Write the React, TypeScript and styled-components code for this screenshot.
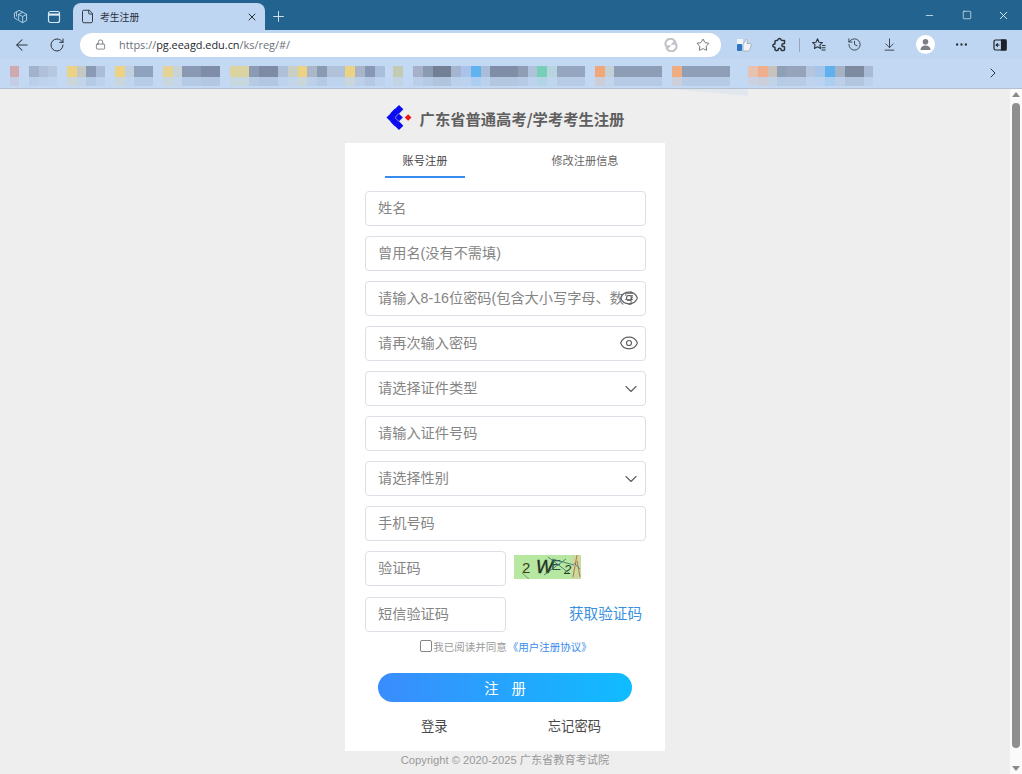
import React from "react";
import styled, { createGlobalStyle } from "styled-components";
import {
  ArrowLeft,
  ArrowDownToLine,
  ChevronDown,
  ChevronRight,
  Eye,
  File,
  History,
  Lock,
  Minus,
  MoreHorizontal,
  Plus,
  RotateCw,
  Square,
  Star,
  X,
} from "lucide-react";

const GlobalStyle = createGlobalStyle`
  html, body {
    margin: 0;
    padding: 0;
    height: 100%;
    overflow: hidden;
    font-family: "Liberation Sans", "Noto Sans CJK SC", sans-serif;
  }
  * { box-sizing: border-box; }
`;

const Shell = styled.div`
  width: 100%;
  height: 100vh;
  display: flex;
  flex-direction: column;
  overflow: hidden;
  background: #eeeeee;
`;

const TitleBar = styled.div`
  height: 30px;
  flex: none;
  display: flex;
  align-items: flex-end;
  background: #22648f;
  color: #dce9f3;
`;

const TitleSlot = styled.div<{ $w: number }>`
  width: ${(p) => p.$w}px;
  height: 27px;
  flex: none;
  display: flex;
  align-items: center;
  justify-content: center;
`;

const Tab = styled.div`
  width: 192px;
  height: 27px;
  flex: none;
  display: flex;
  align-items: center;
  gap: 5px;
  padding: 0 7px 0 7px;
  border-radius: 8px 8px 0 0;
  background: #bfd6f2;
  color: #2a3138;
`;

const TabTitle = styled.span`
  flex: 1;
  font-size: 9.8px;
  font-family: "Noto Sans CJK SC", sans-serif;
`;

const WindowControls = styled.div`
  margin-left: auto;
  height: 30px;
  display: flex;
  align-items: center;
`;

const WindowButton = styled.div`
  width: 37px;
  display: flex;
  justify-content: center;
  color: #ffffff;
`;

const ToolBar = styled.div`
  height: 29px;
  flex: none;
  display: flex;
  align-items: center;
  padding-left: 4px;
  background: #bfd6f2;
  color: #2d3640;
`;

const ToolSlot = styled.div<{ $w?: number; $left?: number }>`
  width: ${(p) => p.$w ?? 36}px;
  margin-left: ${(p) => p.$left ?? 0}px;
  height: 24px;
  flex: none;
  display: flex;
  align-items: center;
  justify-content: center;
`;

const AddressPill = styled.div`
  width: 641px;
  height: 24px;
  margin-left: 6px;
  margin-right: 5px;
  flex: none;
  display: flex;
  align-items: center;
  padding: 0 11px 0 15px;
  border-radius: 12px;
  background: #ffffff;
  color: #444c55;
`;

const Url = styled.div`
  margin-left: 13px;
  flex: 1;
  font-size: 10.9px;
  font-family: "Open Sans", sans-serif;
  color: #6a7078;
  white-space: nowrap;
  b {
    font-weight: 400;
    color: #23282d;
  }
`;

const ToolDivider = styled.div`
  width: 1px;
  height: 14px;
  margin-left: 1px;
  margin-right: 1px;
  flex: none;
  background: #93a8c0;
`;

const Avatar = styled.div`
  width: 19px;
  height: 19px;
  border-radius: 50%;
  background: #ffffff;
  display: flex;
  align-items: center;
  justify-content: center;
`;

const BookmarkBar = styled.div`
  height: 30px;
  flex: none;
  display: flex;
  align-items: flex-start;
  padding: 7px 0 0 10px;
  background: #c2d8f3;
  border-bottom: 1px solid #b4c0cf;
  position: relative;
`;

const Swatches = styled.div`
  display: flex;
  filter: blur(0.5px);
`;

const Swatch = styled.div<{ $w: number; $c: string }>`
  width: ${(p) => p.$w}px;
  height: 11px;
  flex: none;
  background: ${(p) => p.$c};
  position: relative;
  &::after {
    content: "";
    position: absolute;
    left: 0;
    right: 0;
    top: 11px;
    height: 9px;
    background: ${(p) => p.$c};
    opacity: 0.22;
  }
`;

const BookmarkMore = styled.div`
  position: absolute;
  left: 985px;
  top: 6px;
  color: #2d3640;
`;

const BookmarkFade = styled.div`
  position: absolute;
  left: 672px;
  top: 30px;
  width: 76px;
  height: 7px;
  background: #e2e7ed;
  clip-path: polygon(0 0, 100% 0, 100% 100%);
`;

const Body = styled.div`
  flex: 1;
  min-height: 0;
  display: flex;
`;

const Page = styled.main`
  flex: 1;
  min-width: 0;
  display: flex;
  flex-direction: column;
  align-items: center;
`;

const Brand = styled.header`
  height: 54px;
  flex: none;
  display: flex;
  align-items: center;
  gap: 8px;
  padding-top: 3px;
`;

const BrandTitle = styled.h1`
  margin: 0;
  font-size: 15.3px;
  font-weight: 700;
  color: #5f5f5f;
  font-family: "Noto Sans CJK SC", sans-serif;
`;

const Card = styled.section`
  width: 320px;
  height: 608px;
  flex: none;
  display: flex;
  flex-direction: column;
  background: #ffffff;
`;

const Tabs = styled.div`
  height: 35px;
  flex: none;
  display: flex;
  padding: 0 20px 0 40px;
  justify-content: space-between;
`;

const FormTab = styled.div<{ $active?: boolean }>`
  width: 80px;
  height: 35px;
  display: flex;
  align-items: center;
  justify-content: center;
  white-space: nowrap;
  font-size: 11.2px;
  color: ${(p) => (p.$active ? "#444444" : "#666666")};
  border-bottom: 2px solid ${(p) => (p.$active ? "#3a8bee" : "transparent")};
  font-family: "Noto Sans CJK SC", sans-serif;
`;

const SecondTab = styled(FormTab)`
  margin-right: 20px;
`;

const Fields = styled.form`
  margin-top: 13px;
  padding: 0 19px 0 20px;
  display: flex;
  flex-direction: column;
  gap: 10px;
`;

const Field = styled.div<{ $half?: boolean }>`
  position: relative;
  height: 35px;
  flex: none;
  width: ${(p) => (p.$half ? "141px" : "100%")};
`;

const TextInput = styled.input`
  width: 100%;
  height: 100%;
  padding: 0 12px 2px;
  border: 1px solid #dcdfe6;
  border-radius: 4px;
  outline: none;
  background: #ffffff;
  font-size: 14.2px;
  font-family: "Liberation Sans", "Noto Sans CJK SC", sans-serif;
  &::placeholder {
    color: #858585;
    opacity: 1;
  }
`;

const FieldIcon = styled.span<{ $select?: boolean }>`
  position: absolute;
  right: ${(p) => (p.$select ? 5 : 7)}px;
  top: ${(p) => (p.$select ? 8 : 7)}px;
  display: flex;
  color: #626262;
`;

const CodeRow = styled.div<{ $shift?: number }>`
  display: flex;
  align-items: center;
  margin-top: ${(p) => p.$shift ?? 0}px;
`;

const Captcha = styled.svg`
  margin-left: 8px;
  margin-bottom: 4px;
  flex: none;
`;

const SendCode = styled.a`
  margin-left: auto;
  margin-right: 4px;
  margin-bottom: 5px;
  font-size: 14.6px;
  color: #3a8fe0;
  font-family: "Noto Sans CJK SC", sans-serif;
`;

const Agreement = styled.label`
  margin-top: 7px;
  height: 14px;
  display: flex;
  align-items: center;
  justify-content: center;
  padding-left: 2px;
  font-size: 10.5px;
  color: #9a9a9a;
  font-family: "Noto Sans CJK SC", sans-serif;
  a {
    color: #3a8bee;
    margin-left: 1px;
  }
`;

const Check = styled.input`
  appearance: none;
  width: 12px;
  height: 12px;
  margin: 0 1px 0 0;
  border: 1px solid #858585;
  border-radius: 2px;
  background: #ffffff;
`;

const Submit = styled.button`
  width: 254px;
  height: 29px;
  margin: 20px 0 0 33px;
  flex: none;
  border: 0;
  border-radius: 15px;
  background: linear-gradient(90deg, #3a8cfd, #10bcff);
  color: #ffffff;
  font-size: 14.4px;
  white-space: pre;
  font-family: "Noto Sans CJK SC", sans-serif;
`;

const BottomLinks = styled.div`
  margin-top: 14px;
  display: flex;
  justify-content: space-between;
  padding: 0 64px 0 76px;
  font-size: 13.3px;
  color: #484848;
  font-family: "Noto Sans CJK SC", sans-serif;
`;

const Copyright = styled.footer`
  font-size: 11.2px;
  color: #999999;
`;

const ScrollTrack = styled.aside`
  width: 12px;
  flex: none;
  display: flex;
  flex-direction: column;
  align-items: center;
  background: #fafafa;
`;

const ScrollArrow = styled.div<{ $down?: boolean }>`
  width: 0;
  height: 0;
  flex: none;
  margin: 3px 0;
  border-left: 4px solid transparent;
  border-right: 4px solid transparent;
  ${(p) => (p.$down ? "border-top: 5px solid #8a8a8a;" : "border-bottom: 5px solid #8a8a8a;")}
`;

const ScrollThumb = styled.div`
  width: 8px;
  height: 645px;
  margin-top: 3px;
  margin-bottom: auto;
  flex: none;
  border-radius: 4px;
  background: #8e8e8e;
`;

const bookmarks: [number, string][] = [
  [9, "#d0a9b0"], [10, "transparent"], [10, "#a3b2cc"], [9, "#b0c0d8"], [9, "#b6c8e0"], [10, "transparent"],
  [10, "#ecd283"], [9, "#c4c9c4"], [10, "#8a9ab5"], [9, "#aabcd8"], [10, "transparent"],
  [10, "#ecd283"], [9, "#c0d0e0"], [19, "#8fa2bd"], [10, "transparent"],
  [10, "#e4d392"], [9, "#c9d2d4"], [19, "#8999b3"], [19, "#7f8ea8"], [10, "transparent"],
  [19, "#dcd4a0"], [10, "#8b99b3"], [19, "#7d8ba5"], [10, "#aebfd8"], [10, "#c9cfc5"], [9, "#ecd283"], [10, "#a9b7c9"], [10, "#8a9ab0"], [18, "#b0c2da"],
  [10, "#ecd283"], [10, "#a8b5c9"], [10, "#8797b5"], [10, "#a9bfdc"], [8, "transparent"],
  [10, "#c4c9b2"], [10, "transparent"], [10, "#a4b1c9"], [10, "#8a9ab0"], [18, "#737f95"], [10, "#a5b5d0"], [10, "#a9c3ea"], [10, "#5fb3ee"], [9, "#aabdd8"], [28, "#7f8da6"], [10, "#8f9db5"], [9, "#afc2dc"],
  [10, "#78cfb8"], [10, "#b7d4e0"], [28, "#96a6c0"], [10, "transparent"],
  [10, "#f0a878"], [9, "#c4cfd8"], [48, "#8e9db6"], [10, "transparent"],
  [10, "#f0ad82"], [48, "#8f9fb8"], [18, "transparent"],
  [10, "#e8c2b0"], [10, "#f0ae8c"], [9, "#c9c2bc"], [9, "#8f9fb5"], [20, "#95a4bb"], [9, "#b4c5de"],
  [10, "#a6c5ea"], [10, "#5fb0ee"], [10, "#a5b3c5"], [19, "#7d8aa0"], [9, "#a8bad6"],
];

const WorkspacesIcon = () => (
  <svg width="15" height="15" viewBox="0 0 16 16" fill="none" stroke="#bcd3e4" strokeWidth="1">
    <path d="M6.500 1.500 1.500 4.200v5.300l3.500 2.200" />
    <path d="M6.500 1.500 10.500 3.400" />
    <path d="M3.800 3 3.800 8" />
    <path d="M10.300 3.500 14.500 5.700v6.500l-4.200 2.400-4.300-2.400V5.700z" />
    <path d="M6 5.800 10.300 8l4.200-2.300M10.300 8v6.400" />
  </svg>
);

const TabActionsIcon = () => (
  <svg width="14" height="14" viewBox="0 0 14 14" fill="none" stroke="currentColor" strokeWidth="1.2">
    <rect x="1.500" y="1.500" width="11" height="11" rx="2" />
    <path d="M1.500 4.600h11" strokeWidth="2.200" />
  </svg>
);

const ThumbIcon = () => (
  <svg width="16" height="16" viewBox="0 0 16 16">
    <rect x="1" y="2" width="6" height="5" fill="#eef3f9" />
    <rect x="1" y="7" width="5" height="7" rx="1" fill="#2f74c4" />
    <path d="M7 7.500 10 2.500c1.200 0 1.600.9 1.400 2L11 6.500h3.200c.8 0 1.200.7 1 1.400l-1.300 5c-.2.7-.7 1.100-1.400 1.100H7z" fill="#eef3f9" stroke="#9aa7b4" strokeWidth=".8" />
  </svg>
);

// Edge's extensions icon: a rounded puzzle piece, heavier than lucide's
const ExtensionsIcon = () => (
  <svg width="16" height="16" viewBox="0 0 16 16" fill="none" stroke="currentColor" strokeWidth="1.5" strokeLinejoin="round">
    <path d="M6 2.500c.4-1.400 2.700-1.400 3 0 .1.700.6 1 1.300 1h2.200v2.400c0 .6-.6.9-1.100.8-1.700-.4-2.300 3.200 0 2.800.5-.1 1.100.2 1.100.8v2.200c0 .6-.4 1-1 1H9.800c-.6 0-.9-.6-.8-1.100.3-1.600-3-1.600-2.700 0 .1.500-.2 1.100-.8 1.100H4c-.6 0-1-.4-1-1v-1.600c0-.6-.6-.9-1.100-.8C.6 10.300.6 7 1.900 7.200c.5.100 1.100-.2 1.100-.8V4.500c0-.6.400-1 1-1h1c.5 0 .9-.4 1-1z" />
  </svg>
);

const FavouritesIcon = () => (
  <svg width="16" height="16" viewBox="0 0 16 16" fill="none" stroke="currentColor" strokeWidth="1.100" strokeLinejoin="round">
    <path d="M6.500 1.800 8 5.200l3.400.4-2.500 2.300.7 3.600-3.100-1.800-3.100 1.800.7-3.600L1.600 5.600 5 5.200z" />
    <path d="M11 8.500h3.500M10.500 10.800h4M10.500 13h4" />
  </svg>
);

const EdgeRefreshIcon = () => (
  <svg width="14" height="14" viewBox="0 0 14 14" fill="none" stroke="#c0c3c7" strokeWidth="2.200">
    <path d="M2 8A5 5 0 0 1 11 3.600L9.200 5.600h3.600" />
    <path d="M12 6a5 5 0 0 1-9 4.400l1.800-2H1.200" />
  </svg>
);

const SidebarIcon = () => (
  <svg width="14" height="14" viewBox="0 0 14 14" fill="none" stroke="#1d2228" strokeWidth="1.200">
    <rect x="1" y="2" width="12" height="10" rx="1.500" />
    <rect x="8.500" y="2" width="4.500" height="10" fill="#1d2228" />
    <path d="M6.500 7H3.400M4.800 5.400 3.200 7l1.600 1.600" />
  </svg>
);

const UserIcon = () => (
  <svg width="13" height="13" viewBox="0 0 13 13" fill="#7b7f85">
    <circle cx="6.500" cy="3.800" r="2.800" />
    <path d="M1.500 12c0-3 2.100-4.600 5-4.600s5 1.600 5 4.600z" />
  </svg>
);

const LogoMark = () => (
  <svg width="26" height="25" viewBox="0 0 26 26">
    <g fill="#0b0bef">
      <path d="M13 0 17.500 4.500 13 9 8.500 4.500z" />
      <path d="M8.500 4 13 8.500 8.500 13 4 8.500z" />
      <path d="M4.500 8.500 9 13 4.500 17.500 0 13z" />
      <path d="M8.500 13 13 17.500 8.500 22 4 17.500z" />
      <path d="M13 17 17.500 21.500 13 26 8.500 21.500z" />
      <path d="M13 9 17 13 13 17 9 13z" />
    </g>
    <path d="M22.500 9.500 26 13 22.500 16.500 19 13z" fill="#f01818" />
  </svg>
);

const CaptchaImage = () => (
  <Captcha width="67" height="24" viewBox="0 0 67 24">
    <rect width="67" height="24" fill="#b6e8a2" />
    <rect x="58" width="9" height="24" fill="#c9d9a0" />
    <text x="8" y="18" fontFamily="Liberation Sans, sans-serif" fontSize="15" fill="#3b3b14">2</text>
    <text x="22" y="18" fontFamily="Liberation Sans, sans-serif" fontSize="18" fontStyle="italic" fill="#23301f" stroke="#23301f" strokeWidth=".4">W</text>
    <text x="37" y="15" fontFamily="Liberation Sans, sans-serif" fontSize="15" fill="#2a4f46">E</text>
    <text x="50" y="19" fontFamily="Liberation Sans, sans-serif" fontSize="13" fontStyle="italic" fill="#2b3a24">2</text>
    <path d="M34 2 55 18M30 20 52 4M38 4 60 10" stroke="#356a62" strokeWidth=".8" fill="none" />
    <path d="M63 0 59 22M63 6 66 22" stroke="#b7763e" strokeWidth="1" fill="none" />
    <path d="M60 8 66 14" stroke="#4a6f8f" strokeWidth=".8" fill="none" />
    <path d="M8 18 15 24" stroke="#5d7d55" strokeWidth=".7" fill="none" />
  </Captcha>
);

export default function App() {
  return (
    <Shell>
      <GlobalStyle />
      <TitleBar>
        <TitleSlot $w={40}>
          <WorkspacesIcon />
        </TitleSlot>
        <TitleSlot $w={28}>
          <TabActionsIcon />
        </TitleSlot>
        <TitleSlot $w={5} />
        <Tab>
          <File size={15} strokeWidth={1.5} />
          <TabTitle>考生注册</TabTitle>
          <X size={12} strokeWidth={2} />
        </Tab>
        <TitleSlot $w={27}>
          <Plus size={17} strokeWidth={1.3} />
        </TitleSlot>
        <WindowControls>
          <WindowButton>
            <Minus size={11} strokeWidth={1.5} />
          </WindowButton>
          <WindowButton>
            <Square size={10} strokeWidth={1.5} />
          </WindowButton>
          <WindowButton>
            <X size={13} strokeWidth={1.5} />
          </WindowButton>
        </WindowControls>
      </TitleBar>

      <ToolBar>
        <ToolSlot>
          <ArrowLeft size={18} strokeWidth={1.4} />
        </ToolSlot>
        <ToolSlot $w={34}>
          <RotateCw size={16} strokeWidth={1.5} />
        </ToolSlot>
        <AddressPill>
          <Lock size={11} strokeWidth={1.4} />
          <Url>
            https://<b>pg.eeagd.edu.cn</b>/ks/reg/#/
          </Url>
          <EdgeRefreshIcon />
          <ToolSlot $w={14} $left={18}>
            <Star size={14} strokeWidth={1.3} />
          </ToolSlot>
        </AddressPill>
        <ToolSlot>
          <ThumbIcon />
        </ToolSlot>
        <ToolSlot>
          <ExtensionsIcon />
        </ToolSlot>
        <ToolDivider />
        <ToolSlot>
          <FavouritesIcon />
        </ToolSlot>
        <ToolSlot $w={35}>
          <History size={15} strokeWidth={1.4} />
        </ToolSlot>
        <ToolSlot $w={35}>
          <ArrowDownToLine size={15} strokeWidth={1.4} />
        </ToolSlot>
        <ToolSlot>
          <Avatar>
            <UserIcon />
          </Avatar>
        </ToolSlot>
        <ToolSlot>
          <MoreHorizontal size={15} strokeWidth={1.8} />
        </ToolSlot>
        <ToolSlot $left={3}>
          <SidebarIcon />
        </ToolSlot>
      </ToolBar>

      <BookmarkBar>
        <Swatches>
          {bookmarks.map(([w, c], i) => (
            <Swatch key={i} $w={w} $c={c} />
          ))}
        </Swatches>
        <BookmarkMore>
          <ChevronRight size={16} strokeWidth={1.5} />
        </BookmarkMore>
        <BookmarkFade />
      </BookmarkBar>

      <Body>
        <Page>
          <Brand>
            <LogoMark />
            <BrandTitle>广东省普通高考/学考考生注册</BrandTitle>
          </Brand>
          <Card>
            <Tabs>
              <FormTab $active>账号注册</FormTab>
              <SecondTab>修改注册信息</SecondTab>
            </Tabs>
            <Fields>
              <Field>
                <TextInput placeholder="姓名" />
              </Field>
              <Field>
                <TextInput placeholder="曾用名(没有不需填)" />
              </Field>
              <Field>
                <TextInput placeholder="请输入8-16位密码(包含大小写字母、数字和特殊字符)" />
                <FieldIcon>
                  <Eye size={20} strokeWidth={1.4} />
                </FieldIcon>
              </Field>
              <Field>
                <TextInput placeholder="请再次输入密码" />
                <FieldIcon>
                  <Eye size={20} strokeWidth={1.4} />
                </FieldIcon>
              </Field>
              <Field>
                <TextInput placeholder="请选择证件类型" readOnly />
                <FieldIcon $select>
                  <ChevronDown size={20} strokeWidth={1.4} />
                </FieldIcon>
              </Field>
              <Field>
                <TextInput placeholder="请输入证件号码" />
              </Field>
              <Field>
                <TextInput placeholder="请选择性别" readOnly />
                <FieldIcon $select>
                  <ChevronDown size={20} strokeWidth={1.4} />
                </FieldIcon>
              </Field>
              <Field>
                <TextInput placeholder="手机号码" />
              </Field>
              <CodeRow>
                <Field $half>
                  <TextInput placeholder="验证码" />
                </Field>
                <CaptchaImage />
              </CodeRow>
              <CodeRow $shift={1}>
                <Field $half>
                  <TextInput placeholder="短信验证码" />
                </Field>
                <SendCode>获取验证码</SendCode>
              </CodeRow>
            </Fields>
            <Agreement>
              <Check type="checkbox" />
              我已阅读并同意
              <a>《用户注册协议》</a>
            </Agreement>
            <Submit>注{"    "}册</Submit>
            <BottomLinks>
              <span>登录</span>
              <span>忘记密码</span>
            </BottomLinks>
          </Card>
          <Copyright>Copyright © 2020-2025 广东省教育考试院</Copyright>
        </Page>
        <ScrollTrack>
          <ScrollArrow />
          <ScrollThumb />
          <ScrollArrow $down />
        </ScrollTrack>
      </Body>
    </Shell>
  );
}
